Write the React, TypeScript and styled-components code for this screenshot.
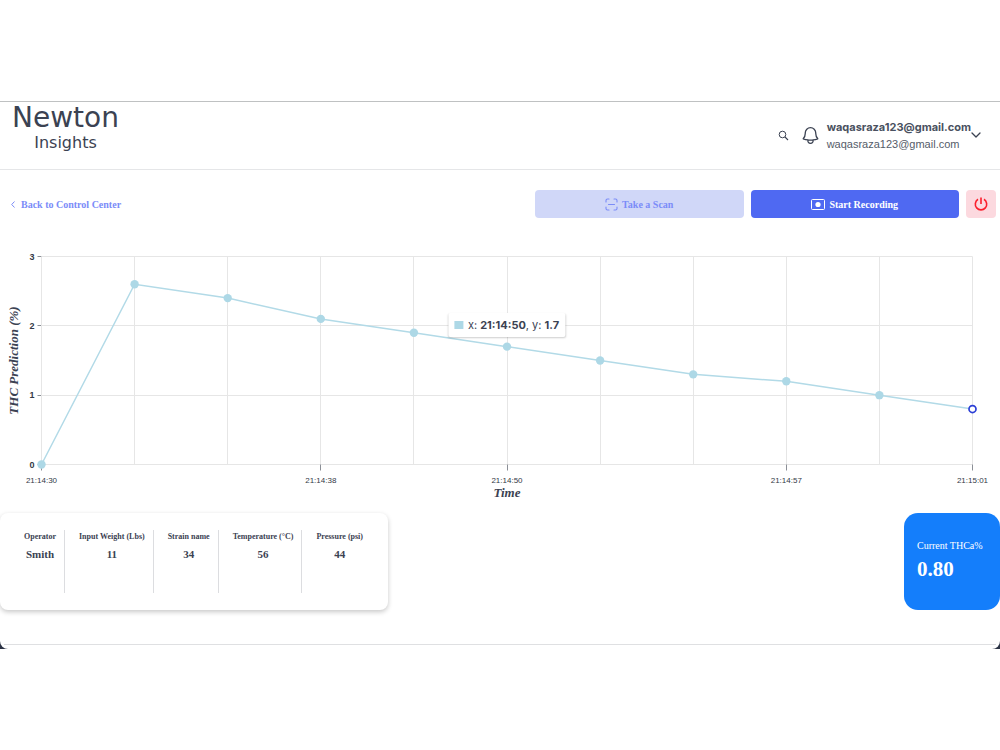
import React, { useLayoutEffect, useRef, useState } from 'react';
import styled, { createGlobalStyle } from 'styled-components';

const ui = "Inter, 'Liberation Sans', sans-serif";
const serif = "'Liberation Serif', serif";
const ink = '#3b4252';

const GlobalStyle = createGlobalStyle`
  *, *::before, *::after { box-sizing: border-box; }
  body { margin: 0; background: #fff; color: ${ink}; font-family: ${serif}; }
  button { font: inherit; border: 0; cursor: pointer; }
`;

const Page = styled.div`
  padding: 101px 0;
`;

const Backdrop = styled.div`
  background: #2b3345;
`;

const AppWindow = styled.div`
  background: #fff;
  border-top: 1px solid #bfc1c2;
  border-radius: 0 0 8px 8px;
  padding-bottom: 4px;
`;

const Header = styled.header`
  display: flex;
  justify-content: space-between;
  height: 68px;
  border-bottom: 1px solid #e5e6e8;
  padding: 0 19px 0 12px;
`;

const Brand = styled.div`
  display: flex;
  flex-direction: column;
  align-items: center;
  font-family: 'DejaVu Sans', sans-serif;
`;

const BrandName = styled.span`
  font-size: 28px;
  line-height: 31px;
`;

const BrandSub = styled.span`
  font-size: 16px;
  line-height: 20px;
`;

const Account = styled.div`
  display: flex;
  align-items: center;
  font-family: ${ui};
  font-size: 11px;
  line-height: 17px;
`;

const IconButton = styled.button`
  display: flex;
  padding: 0;
  background: none;
  color: ${ink};
`;

const BellButton = styled(IconButton)`
  margin: 0 6px 0 11px;
`;

const Emails = styled.div`
  display: flex;
  flex-direction: column;
  color: #555c69;
`;

const Strong = styled.strong`
  font-weight: 700;
  color: #4a5160;
`;

const Light = styled.span`
  font-family: 'Liberation Sans', sans-serif;
`;

const Toolbar = styled.div`
  display: flex;
  align-items: center;
  justify-content: space-between;
  padding: 20px 4px 0 10px;
  font-size: 10px;
  font-weight: bold;
`;

const BackLink = styled.a`
  display: flex;
  align-items: center;
  gap: 5px;
  color: #7b8cf8;
  text-decoration: none;
`;

const Actions = styled.div`
  display: flex;
  gap: 7px;
  width: 461px;
`;

const Action = styled.button<{ $primary?: boolean }>`
  flex: 1;
  display: flex;
  align-items: center;
  justify-content: center;
  gap: 4px;
  height: 28px;
  padding: 0;
  border-radius: 4px;
  background: ${(p) => (p.$primary ? '#4f69f2' : '#d0d7f8')};
  color: ${(p) => (p.$primary ? '#fff' : '#7b8cf8')};
`;

const PowerButton = styled(Action)`
  flex: 0 0 30px;
  background: #fcd9df;
  color: #fb1f2c;
`;

const ChartBox = styled.div`
  position: relative;
  margin-top: 22px;
  height: 265px;
`;

const ChartSvg = styled.svg`
  display: block;
  overflow: visible;
`;

const TickText = styled.text<{ $bold?: boolean }>`
  font-family: 'Liberation Sans', sans-serif;
  font-size: ${(p) => (p.$bold ? 9 : 8)}px;
  font-weight: ${(p) => (p.$bold ? 'bold' : 'normal')};
  fill: #333a47;
`;

const AxisTitle = styled.text`
  font: italic bold 13px ${serif};
  fill: ${ink};
  text-anchor: middle;
`;

const Tooltip = styled.div`
  position: absolute;
  transform: translate(-50%, -100%);
  display: flex;
  align-items: center;
  gap: 5px;
  height: 24px;
  padding: 0 6px;
  border-radius: 2px;
  background: #fff;
  box-shadow: 0 1px 2px rgba(0, 0, 0, 0.2);
  font-family: ${ui};
  font-size: 11px;
  white-space: nowrap;
`;

const Swatch = styled.span`
  width: 9px;
  height: 8px;
  background: #add8e6;
`;

const Summary = styled.div`
  display: flex;
  justify-content: space-between;
  padding-top: 8px;
`;

const RunCard = styled.dl`
  display: flex;
  margin: 0;
  height: 97px;
  padding: 17px 11px;
  border-radius: 8px;
  box-shadow: 0 2px 5px rgba(0, 0, 0, 0.22);
  text-align: center;
`;

const Field = styled.div`
  padding: 0 8px 0 14px;
  font-size: 8px;
  line-height: 14px;
  font-weight: bold;

  &:first-child { padding-left: 13px; }
  &:last-child { padding-right: 14px; }
  & + & { border-left: 1px solid #dcdde0; }
`;

const Value = styled.dd`
  margin: 2px 0 0;
  font-size: 11px;
  line-height: 16px;
`;

const Reading = styled.section`
  width: 96px;
  height: 97px;
  padding: 25px 0 0 13px;
  border-radius: 14px;
  background: #147efb;
  color: #fff;
  font-size: 10px;
  line-height: 16px;
  white-space: nowrap;
`;

const ReadingValue = styled.div`
  margin-top: 2px;
  font-size: 21px;
  line-height: 26px;
  font-weight: bold;
`;

const Footer = styled.footer`
  margin: 34px 4px 0;
  border-top: 1px solid #dfe0e2;
`;

const samples = [
  { t: '21:14:30', v: 0, tick: true },
  { t: '21:14:32', v: 2.6 },
  { t: '21:14:35', v: 2.4 },
  { t: '21:14:38', v: 2.1, tick: true },
  { t: '21:14:44', v: 1.9 },
  { t: '21:14:50', v: 1.7, tick: true },
  { t: '21:14:52', v: 1.5 },
  { t: '21:14:55', v: 1.3 },
  { t: '21:14:57', v: 1.2, tick: true },
  { t: '21:14:59', v: 1.0 },
  { t: '21:15:01', v: 0.8, tick: true },
];

const fields = [
  ['Operator', 'Smith'],
  ['Input Weight (Lbs)', '11'],
  ['Strain name', '34'],
  ['Temperature (°C)', '56'],
  ['Pressure (psi)', '44'],
];

const margin = { left: 41, right: 28, top: 16 };
const plotHeight = 208;
const hovered = 5;

function Chart() {
  const box = useRef<HTMLDivElement>(null);
  const [width, setWidth] = useState(0);

  useLayoutEffect(() => {
    const node = box.current!;
    const measure = () => setWidth(node.clientWidth);
    measure();
    const observer = new ResizeObserver(measure);
    observer.observe(node);
    return () => observer.disconnect();
  }, []);

  const right = width - margin.right;
  const bottom = margin.top + plotHeight;
  const x = (i: number) => margin.left + ((right - margin.left) * i) / (samples.length - 1);
  const y = (v: number) => bottom - (v * plotHeight) / 3;
  const line = Math.round;

  return (
    <ChartBox ref={box}>
      {width > 0 && (
        <>
          <ChartSvg width={width} height={265} role="img" aria-label="THC prediction over time">
            <g transform="translate(.5 .5)">
              {[0, 1, 2, 3].map((v) => (
                <g key={v}>
                  <line x1={margin.left} x2={right} y1={line(y(v))} y2={line(y(v))} stroke="#e6e6e6" />
                  <line x1={margin.left - 4} x2={margin.left} y1={line(y(v))} y2={line(y(v))} stroke="#8b8f96" />
                  <TickText $bold x={margin.left - 7} y={y(v) + 3} textAnchor="end">{v}</TickText>
                </g>
              ))}
              {samples.map((s, i) => (
                <g key={s.t}>
                  <line x1={line(x(i))} x2={line(x(i))} y1={margin.top} y2={bottom} stroke="#e6e6e6" />
                  {s.tick && (
                    <>
                      <line x1={line(x(i))} x2={line(x(i))} y1={bottom} y2={bottom + 6} stroke="#8b8f96" />
                      <TickText x={x(i)} y={bottom + 18} textAnchor="middle">{s.t}</TickText>
                    </>
                  )}
                </g>
              ))}
              <polyline
                points={samples.map((s, i) => `${x(i)},${y(s.v)}`).join(' ')}
                fill="none"
                stroke="#b2dae7"
                strokeWidth="1.5"
              />
              {samples.map((s, i) =>
                i === samples.length - 1 ? (
                  <circle key={s.t} cx={x(i)} cy={y(s.v)} r="3.5" fill="#fff" stroke="#2b3fd6" strokeWidth="1.7" />
                ) : (
                  <circle key={s.t} cx={x(i)} cy={y(s.v)} r="4.2" fill="#add8e6" />
                ),
              )}
              <AxisTitle x={(margin.left + right) / 2} y={bottom + 32}>Time</AxisTitle>
              <AxisTitle transform={`translate(17 ${margin.top + plotHeight / 2}) rotate(-90)`}>
                THC Prediction (%)
              </AxisTitle>
            </g>
          </ChartSvg>
          <Tooltip style={{ left: x(hovered), top: y(samples[hovered].v) - 9 }}>
            <Swatch />
            <span>
              x: <b>{samples[hovered].t}</b>, y: <b>{samples[hovered].v}</b>
            </span>
          </Tooltip>
        </>
      )}
    </ChartBox>
  );
}

export default function App() {
  return (
    <Page>
      <GlobalStyle />
      <Backdrop>
        <AppWindow>
          <Header>
            <Brand>
              <BrandName>Newton</BrandName>
              <BrandSub>Insights</BrandSub>
            </Brand>
            <Account>
              <IconButton aria-label="Search">
                <svg width="11" height="11" viewBox="0 0 11 11" fill="none" stroke="currentColor">
                  <circle cx="4.5" cy="4.5" r="3.3" />
                  <path d="M7 7l3 3" strokeWidth="1.1" />
                </svg>
              </IconButton>
              <BellButton aria-label="Notifications">
                <svg width="21" height="21" viewBox="0 0 24 24" fill="none" stroke="currentColor" strokeWidth="1.5" strokeLinecap="round" strokeLinejoin="round">
                  <path d="M14.857 17.082a23.848 23.848 0 0 0 5.454-1.31A8.967 8.967 0 0 1 18 9.75V9A6 6 0 0 0 6 9v.75a8.967 8.967 0 0 1-2.312 6.022c1.733.64 3.56 1.085 5.455 1.31m5.714 0a24.255 24.255 0 0 1-5.714 0m5.714 0a3 3 0 1 1-5.714 0" />
                </svg>
              </BellButton>
              <Emails>
                <Strong>waqasraza123@gmail.com</Strong>
                <Light>waqasraza123@gmail.com</Light>
              </Emails>
              <IconButton aria-label="Account menu">
                <svg width="10" height="10" viewBox="0 0 10 10" fill="none" stroke="currentColor" strokeWidth="1.3" strokeLinecap="round" strokeLinejoin="round">
                  <path d="M1 2l4 4 4-4" />
                </svg>
              </IconButton>
            </Account>
          </Header>

          <Toolbar>
            <BackLink href="#control-center">
              <svg width="6" height="8" viewBox="0 0 6 8" fill="none" stroke="currentColor">
                <path d="M4.5 1.5L1.7 4.5l2.8 3" />
              </svg>
              Back to Control Center
            </BackLink>
            <Actions>
              <Action>
                <svg width="13" height="13" viewBox="0 0 13 13" fill="none" stroke="currentColor" strokeWidth="1.1" strokeLinecap="round">
                  <path d="M1 4V2.5Q1 1 2.5 1H4M9 1h1.500Q12 1 12 2.500V4M12 9v1.500Q12 12 10.500 12H9M4 12H2.500Q1 12 1 10.500V9M3.500 6.500h6" />
                </svg>
                Take a Scan
              </Action>
              <Action $primary>
                <svg width="14" height="11" viewBox="0 0 14 11" fill="none" stroke="currentColor">
                  <rect x=".5" y=".5" width="13" height="10" rx="1" />
                  <circle cx="7" cy="5.500" r="2.600" fill="currentColor" stroke="none" />
                </svg>
                Start Recording
              </Action>
              <PowerButton aria-label="Power off">
                <svg width="14" height="14" viewBox="0 0 14 14" fill="none" stroke="currentColor" strokeWidth="1.6">
                  <path d="M7 .5v6.500M4 2.300a5.700 5.700 0 1 0 6 0" />
                </svg>
              </PowerButton>
            </Actions>
          </Toolbar>

          <Chart />

          <Summary>
            <RunCard>
              {fields.map(([label, value]) => (
                <Field key={label}>
                  <dt>{label}</dt>
                  <Value>{value}</Value>
                </Field>
              ))}
            </RunCard>
            <Reading>
              Current THCa%
              <ReadingValue>0.80</ReadingValue>
            </Reading>
          </Summary>
          <Footer />
        </AppWindow>
      </Backdrop>
    </Page>
  );
}
